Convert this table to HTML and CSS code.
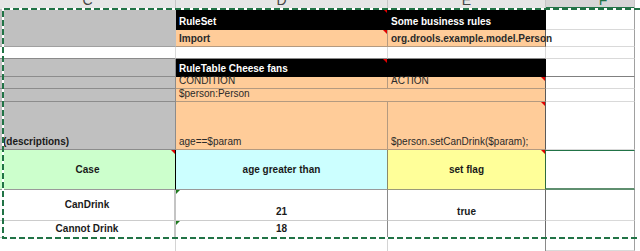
FILE: index.html
```html
<!DOCTYPE html>
<html>
<head>
<meta charset="utf-8">
<link rel="stylesheet" href="styles.css">
</head>
<body>
<div class="wrap">
  <div class="sheet">
    <!-- column headers -->
    <div class="hdr"><span>C</span></div>
    <div class="hdr"><span>D</span></div>
    <div class="hdr"><span>E</span></div>
    <div class="hdr hdr-active"><span>F</span></div>
    <div class="hdr hdr-edge"></div>

    <!-- rows 1-2 -->
    <div class="c gray span-r2 g-top"></div>
    <div class="c black b cm">RuleSet</div>
    <div class="c black b">Some business rules</div>
    <div class="c f"></div>
    <div class="c edge"></div>

    <div class="c orange b cm">Import</div>
    <div class="c orange b o-last">org.drools.example.model.Person</div>
    <div class="c f"></div>
    <div class="c edge"></div>

    <!-- row 3 -->
    <div class="c blank"></div>
    <div class="c blank"></div>
    <div class="c blank"></div>
    <div class="c f"></div>
    <div class="c edge"></div>

    <!-- row 4 -->
    <div class="c gray"></div>
    <div class="c black b span-c2 cm-mid">RuleTable Cheese fans</div>
    <div class="c f f-dark"></div>
    <div class="c edge"></div>

    <!-- row 5 -->
    <div class="c gray"></div>
    <div class="c orange">CONDITION</div>
    <div class="c orange o-last cm">ACTION</div>
    <div class="c f"></div>
    <div class="c edge"></div>

    <!-- row 6 -->
    <div class="c gray"></div>
    <div class="c orange span-c2 o-last">$person:Person</div>
    <div class="c f"></div>
    <div class="c edge"></div>

    <!-- row 7 -->
    <div class="c gray b">(descriptions)</div>
    <div class="c orange">age==$param</div>
    <div class="c orange o-last cm">$person.setCanDrink($param);</div>
    <div class="c f"></div>
    <div class="c edge"></div>

    <!-- row 8 -->
    <div class="c green b mid cm">Case</div>
    <div class="c cyan b mid">age greater than</div>
    <div class="c yellow b mid cm">set flag</div>
    <div class="c f active"></div>
    <div class="c edge"></div>

    <!-- row 9 -->
    <div class="c data-c b mid">CanDrink</div>
    <div class="c data-d b ctr gt">21</div>
    <div class="c data-e b ctr">true</div>
    <div class="c f"></div>
    <div class="c edge"></div>

    <!-- row 10 -->
    <div class="c data-c b mid">Cannot Drink</div>
    <div class="c data-d b ctr gt">18</div>
    <div class="c data-e"></div>
    <div class="c f"></div>
    <div class="c edge"></div>

    <!-- row 11 -->
    <div class="c tail-c"></div>
    <div class="c tail-d"></div>
    <div class="c tail-e"></div>
    <div class="c f"></div>
    <div class="c edge"></div>
  </div>

  <svg class="ants" width="640" height="251" viewBox="0 0 640 251">
    <path d="M640 9 H3 V238 H640" fill="none" stroke="#ffffff" stroke-width="2"/>
    <path d="M640 9 H3 V238 H640" fill="none" stroke="#217346" stroke-width="2" stroke-dasharray="6 3"/>
  </svg>
</div>
</body>
</html>
```

FILE: styles.css
```css
* { box-sizing: border-box; }

html, body {
  margin: 0;
  padding: 0;
  background: #ffffff;
}

body {
  font-family: "Liberation Sans", Arial, sans-serif;
  font-size: 10px;
  color: #1a1a1a;
  overflow: hidden;
  width: 640px;
  height: 251px;
}

.wrap {
  position: relative;
  width: 640px;
  height: 251px;
}

.sheet {
  display: grid;
  grid-template-columns: 176px 212px 158px 89px 5px;
  grid-template-rows: 9px 21px 17px 12px 18px 12px 13px 48px 40px 31px 17px 13px;
}

/* column header band */
.hdr {
  background: #e6e6e6;
  border-right: 1px solid #c6c6c6;
  overflow: hidden;
  text-align: center;
  font-size: 14px;
  line-height: 14px;
  color: #444444;
}
.hdr span {
  display: block;
  margin-top: -7px;
}
.hdr-active {
  background: #d6d6d6;
  color: #217346;
  border-bottom: 2px solid #217346;
  padding-left: 26px;
}
.hdr-edge {
  background: #ffffff;
  border-right: none;
}

/* generic cell */
.c {
  position: relative;
  display: flex;
  align-items: flex-end;
  padding: 0 0 1px 3px;
  line-height: 12px;
  white-space: nowrap;
  border-right: 1px solid #d9d9d9;
  border-bottom: 1px solid #d9d9d9;
}

.b { font-weight: bold; }

.span-r2 { grid-row: span 2; }
.span-c2 { grid-column: span 2; }

.gray {
  background: #c0c0c0;
  border-right: 1px solid #8c8c8c;
  border-bottom: 1px solid #8c8c8c;
}
.g-top {
  border-right-color: #c0c0c0;
  border-bottom-color: #a0a0a0;
}

.black {
  background: #000000;
  color: #ffffff;
  border-right-color: #000000;
  border-bottom-color: #000000;
}

.orange {
  background: #ffcc99;
  color: #2a2a2a;
  border-right: 1px solid #b49a80;
  border-bottom: 1px solid #b49a80;
}
.o-last { border-right-color: #5a5a5a; }

.blank {
  border-bottom-color: #8a8a8a;
}

.f { border-right: 1px solid #a0a0a0; }
.f-dark { border-bottom-color: #808080; }
.edge {
  border-right: none;
  border-bottom: none;
}

.mid {
  justify-content: center;
  align-items: center;
  padding: 0;
}
.ctr {
  justify-content: center;
  padding: 0 0 2px 0;
}

.green {
  background: #ccffcc;
  border-right: 1px solid #000000;
  border-bottom: 1px solid #9a9a9a;
}
.cyan {
  background: #ccffff;
  border-right: 1px solid #8a8a6a;
  border-bottom: 1px solid #9a9a9a;
}
.yellow {
  background: #ffff99;
  border-right: 1px solid #2e6b3e;
  border-bottom: 1px solid #9a9a7a;
}
.active {
  border-top: 1px solid #217346;
  border-bottom: 2px solid #5f8f6f;
}

.data-c {
  border-right: 2px solid #c4c4c4;
  border-bottom: 1px solid #cccccc;
}
.data-d {
  border-right: 1px solid #8a8a8a;
  border-bottom: 1px solid #cccccc;
}
.data-e {
  border-right: 1px solid #6a6a6a;
  border-bottom: 1px solid #cccccc;
}

.tail-c { border-right: 1px solid #d4d4d4; border-bottom: none; }
.tail-d { border-right: 1px solid #d4d4d4; border-bottom: none; }
.tail-e { border-right: 1px solid #8a8a8a; border-bottom: none; }

/* comment indicators (red) */
.cm::after,
.cm-mid::after {
  content: "";
  position: absolute;
  top: 0;
  right: 0;
  border-top: 4px solid #e00000;
  border-left: 4px solid transparent;
}
.cm-mid::after {
  right: 158px;
}

/* number-as-text indicators (green) */
.gt::before {
  content: "";
  position: absolute;
  top: 0;
  left: 0;
  border-top: 4px solid #1e7a1e;
  border-right: 4px solid transparent;
}

/* marching-ants selection outline */
.ants {
  position: absolute;
  left: 0;
  top: 0;
  pointer-events: none;
}
```
